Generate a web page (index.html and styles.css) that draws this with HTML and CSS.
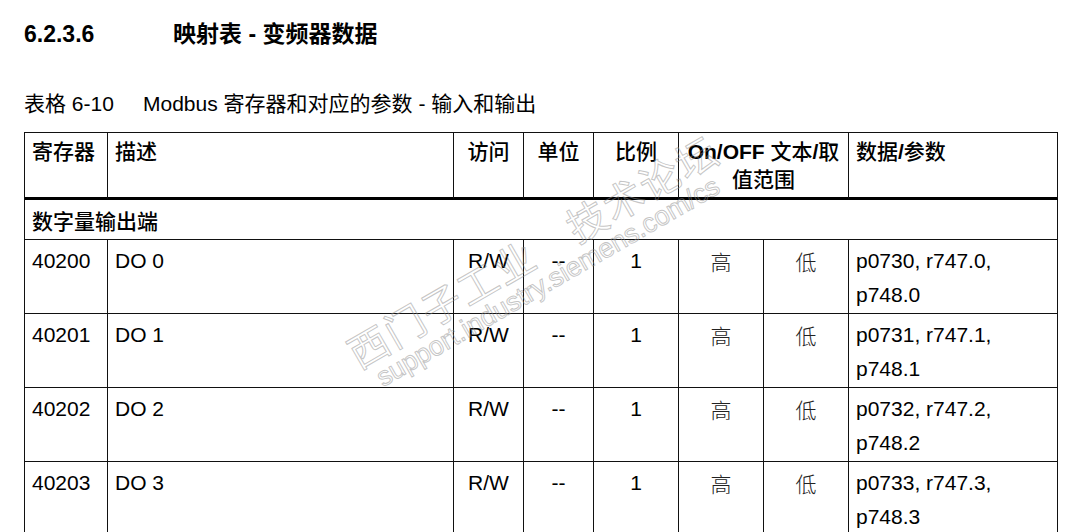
FILE: index.html
```html
<!DOCTYPE html>
<html lang="zh-CN">
<head>
<meta charset="utf-8">
<title>映射表 - 变频器数据</title>
<link rel="stylesheet" href="styles.css">
</head>
<body>
<div class="page">
  <h1 class="section-title"><span class="num">6.2.3.6</span><span class="text">映射表 - 变频器数据</span></h1>
  <p class="caption"><span class="cap-num">表格 6-10</span><span class="cap-text">Modbus 寄存器和对应的参数 - 输入和输出</span></p>
  <table class="map">
    <colgroup>
      <col class="c-reg"><col class="c-desc"><col class="c-acc"><col class="c-unit"><col class="c-scale"><col class="c-on"><col class="c-off"><col class="c-data">
    </colgroup>
    <thead>
      <tr>
        <th class="left">寄存器</th>
        <th class="left">描述</th>
        <th>访问</th>
        <th>单位</th>
        <th>比例</th>
        <th colspan="2"><b>On/OFF</b> 文本<b>/</b>取<br>值范围</th>
        <th class="left">数据<b>/</b>参数</th>
      </tr>
    </thead>
    <tbody>
      <tr class="group"><td colspan="8">数字量输出端</td></tr>
      <tr>
        <td>40200</td><td>DO 0</td><td class="ctr">R/W</td><td class="ctr">--</td><td class="ctr">1</td><td class="ctr cjk">高</td><td class="ctr cjk">低</td><td>p0730, r747.0,<br>p748.0</td>
      </tr>
      <tr>
        <td>40201</td><td>DO 1</td><td class="ctr">R/W</td><td class="ctr">--</td><td class="ctr">1</td><td class="ctr cjk">高</td><td class="ctr cjk">低</td><td>p0731, r747.1,<br>p748.1</td>
      </tr>
      <tr>
        <td>40202</td><td>DO 2</td><td class="ctr">R/W</td><td class="ctr">--</td><td class="ctr">1</td><td class="ctr cjk">高</td><td class="ctr cjk">低</td><td>p0732, r747.2,<br>p748.2</td>
      </tr>
      <tr>
        <td>40203</td><td>DO 3</td><td class="ctr">R/W</td><td class="ctr">--</td><td class="ctr">1</td><td class="ctr cjk">高</td><td class="ctr cjk">低</td><td>p0733, r747.3,<br>p748.3</td>
      </tr>
    </tbody>
  </table>
  <div class="watermark" aria-hidden="true">
    <div class="wm-cn">西门子工业　技术论坛</div>
    <div class="wm-en">support.industry.siemens.com/cs</div>
  </div>
</div>
</body>
</html>
```

FILE: styles.css
```css
html, body {
  margin: 0;
  padding: 0;
  background: #ffffff;
  overflow: hidden;
}

body {
  font-family: "Liberation Sans", "Noto Sans CJK SC", sans-serif;
  color: #000;
}

.page {
  position: relative;
  padding: 0 0 0 24px;
}

.section-title {
  margin: 19px 0 0 0;
  font-size: 23px;
  line-height: 30px;
  font-weight: bold;
  display: flex;
}

.section-title .num {
  width: 149px;
}

.caption {
  margin: 43px 0 0 0;
  font-size: 21px;
  line-height: 24px;
  display: flex;
}

.caption .cap-num {
  width: 119px;
}

.map {
  margin-top: 16px;
  border-collapse: separate;
  border-spacing: 0;
  table-layout: fixed;
  width: 1034px;
  border-top: 1px solid #111;
  border-left: 1px solid #111;
  font-size: 21px;
}

.map col.c-reg { width: 83px; }
.map col.c-desc { width: 346px; }
.map col.c-acc { width: 70px; }
.map col.c-unit { width: 70px; }
.map col.c-scale { width: 85px; }
.map col.c-on { width: 85px; }
.map col.c-off { width: 85px; }
.map col.c-data { width: 209px; }

.map th, .map td {
  box-sizing: border-box;
  border-right: 1px solid #111;
  border-bottom: 1px solid #111;
  vertical-align: top;
  padding: 4px 0 0 7px;
  white-space: nowrap;
}

.map th {
  font-weight: 500;
  line-height: 28px;
  padding: 5px 0 3px 0;
  text-align: center;
  border-bottom: 3px solid #000;
  height: 67px;
}

.map th b {
  font-weight: bold;
}

.map th.left {
  text-align: left;
  padding-left: 7px;
}

.map td {
  line-height: 34px;
  height: 74px;
}

.map tr.group td {
  height: 40px;
  padding-top: 5px;
  font-weight: 500;
}

.map td.ctr {
  text-align: center;
  padding-left: 0;
}

.map td.cjk {
  font-family: "Noto Sans CJK SC", sans-serif;
  font-weight: 300;
  color: #222;
}

.watermark {
  position: absolute;
  left: 340px;
  top: 318px;
  transform-origin: 0 0;
  transform: rotate(-30deg);
  color: transparent;
  -webkit-text-stroke: 1px rgba(140, 140, 140, 0.5);
  pointer-events: none;
  white-space: nowrap;
}

.wm-cn {
  font-family: "Noto Sans CJK SC", sans-serif;
  font-size: 40px;
  line-height: 42px;
  letter-spacing: 2px;
}

.wm-en {
  font-family: "Liberation Sans", sans-serif;
  font-size: 27px;
  line-height: 28px;
  margin-left: 12px;
}
```
